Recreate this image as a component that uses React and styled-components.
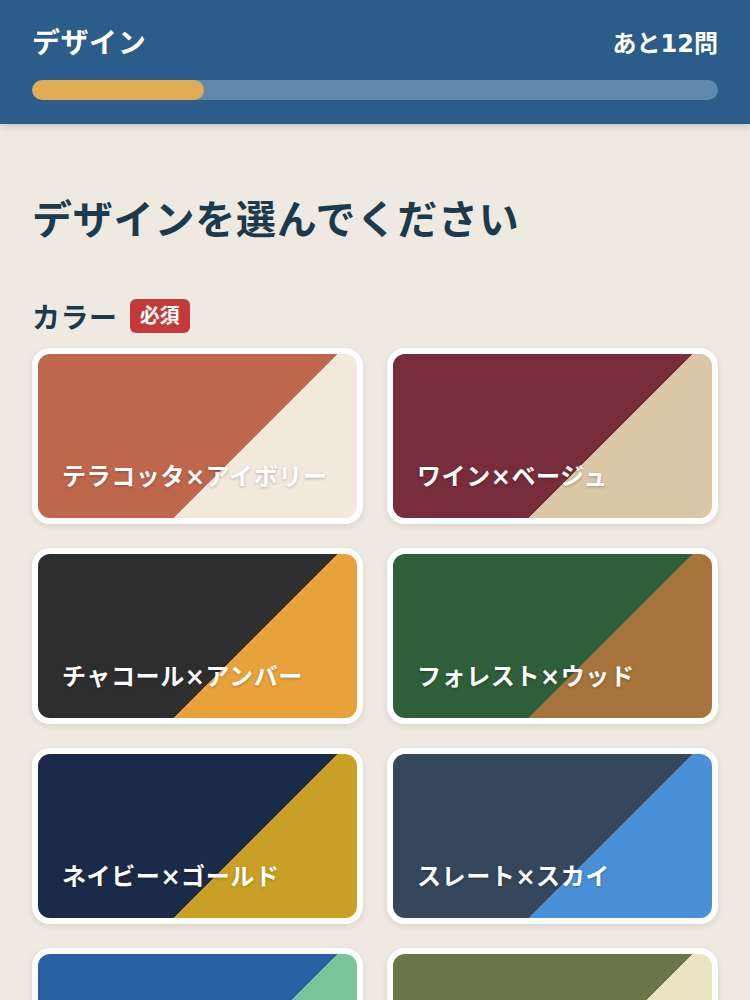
import styled, { createGlobalStyle } from "styled-components";

const GlobalStyle = createGlobalStyle`
  * {
    box-sizing: border-box;
  }
  body {
    margin: 0;
    background: #eeeae1;
    font-family: "DejaVu Sans", "Noto Sans CJK JP", sans-serif;
  }
`;

const colors = [
  { name: "テラコッタ×アイボリー", a: "#bf674c", b: "#f2e8dc" },
  { name: "ワイン×ベージュ", a: "#772d3a", b: "#dbc6a5" },
  { name: "チャコール×アンバー", a: "#2e2e2e", b: "#e8a23c" },
  { name: "フォレスト×ウッド", a: "#2e5e3a", b: "#a6743c" },
  { name: "ネイビー×ゴールド", a: "#1b2a48", b: "#c9a024" },
  { name: "スレート×スカイ", a: "#34475c", b: "#4a90d6" },
  { name: "オーシャン×ミント", a: "#2862a3", b: "#7cc49a" },
  { name: "オリーブ×クリーム", a: "#6b7548", b: "#ece3c3" },
];

const Header = styled.header`
  background: #2b5c8a;
  padding: 20px 32px 24px;
  box-shadow: 0 2px 8px rgba(0, 0, 0, 0.18);
  position: relative;
  z-index: 1;
`;

const HeaderRow = styled.div`
  display: flex;
  justify-content: space-between;
  align-items: center;
  color: #fff;
  height: 42px;
`;

const HeaderTitle = styled.div`
  font-size: 28px;
  font-weight: 700;
  letter-spacing: 0.02em;
`;

const Remaining = styled.div`
  font-size: 24px;
  font-weight: 700;
`;

const Track = styled.div`
  margin-top: 18px;
  height: 20px;
  border-radius: 10px;
  background: #6189ad;
  overflow: hidden;
`;

const Fill = styled.div`
  height: 100%;
  border-radius: 10px;
  background: #e2ab55;
`;

const Main = styled.main`
  padding: 68px 32px 40px;
`;

const Heading = styled.h1`
  margin: 0;
  font-size: 40px;
  line-height: 56px;
  font-weight: 700;
  color: #1c3a4e;
  letter-spacing: 0.02em;
`;

const SectionLabel = styled.div`
  display: flex;
  align-items: center;
  gap: 12px;
  margin-top: 48px;
  margin-bottom: 12px;
`;

const LabelText = styled.span`
  font-size: 28px;
  font-weight: 700;
  color: #1c3a4e;
  letter-spacing: 0.02em;
`;

const Badge = styled.span`
  background: #c33a3a;
  color: #fff;
  font-size: 20px;
  font-weight: 700;
  line-height: 34px;
  padding: 0 10px;
  border-radius: 6px;
`;

const Grid = styled.div`
  display: grid;
  grid-template-columns: 1fr 1fr;
  gap: 24px;
`;

const Card = styled.button`
  height: 176px;
  border: 6px solid #fff;
  border-radius: 18px;
  background: linear-gradient(
    135deg,
    ${(p) => p.$a} 62%,
    ${(p) => p.$b} 62%
  );
  box-shadow: 0 2px 6px rgba(60, 40, 20, 0.12);
  display: flex;
  align-items: flex-end;
  padding: 0 24px 25px;
  cursor: pointer;
  font-family: inherit;
  text-align: left;
`;

const CardName = styled.span`
  color: #fff;
  font-size: 24px;
  font-weight: 700;
  line-height: 32px;
  letter-spacing: 0.025em;
  text-shadow: 0 1px 3px rgba(0, 0, 0, 0.25);
  white-space: nowrap;
`;

export default function App() {
  const progress = 25;
  return (
    <>
      <GlobalStyle />
      <Header>
        <HeaderRow>
          <HeaderTitle>デザイン</HeaderTitle>
          <Remaining>あと12問</Remaining>
        </HeaderRow>
        <Track>
          <Fill style={{ width: `${progress}%` }} />
        </Track>
      </Header>
      <Main>
        <Heading>デザインを選んでください</Heading>
        <SectionLabel>
          <LabelText>カラー</LabelText>
          <Badge>必須</Badge>
        </SectionLabel>
        <Grid>
          {colors.map((c) => (
            <Card key={c.name} $a={c.a} $b={c.b}>
              <CardName>{c.name}</CardName>
            </Card>
          ))}
        </Grid>
      </Main>
    </>
  );
}
